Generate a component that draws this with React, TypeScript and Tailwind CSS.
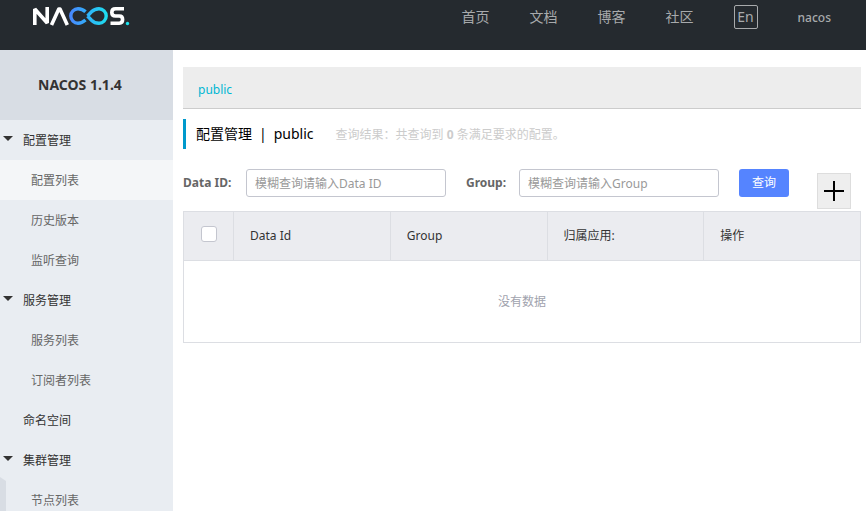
import React from "react";

const navLinks = ["首页", "文档", "博客", "社区"];

type MenuItem = { label: string; kind: "group" | "child" | "plain"; active?: boolean };

const menu: MenuItem[] = [
  { label: "配置管理", kind: "group" },
  { label: "配置列表", kind: "child", active: true },
  { label: "历史版本", kind: "child" },
  { label: "监听查询", kind: "child" },
  { label: "服务管理", kind: "group" },
  { label: "服务列表", kind: "child" },
  { label: "订阅者列表", kind: "child" },
  { label: "命名空间", kind: "plain" },
  { label: "集群管理", kind: "group" },
  { label: "节点列表", kind: "child" },
];

function Logo() {
  return (
    <svg width="97" height="19" viewBox="0 0 97 19" fill="none" aria-label="NACOS" role="img">
      <defs>
        <linearGradient id="loop" x1="36" y1="0" x2="76" y2="0" gradientUnits="userSpaceOnUse">
          <stop offset="0" stopColor="#4a85ff" />
          <stop offset="0.5" stopColor="#2fb4f8" />
          <stop offset="1" stopColor="#1be3ee" />
        </linearGradient>
      </defs>
      <g stroke="#fff" strokeWidth="3.6">
        <path d="M1.800 18V2L14.200 16V0" strokeLinejoin="bevel" />
        <path d="M18.500 18L25.800 2H27L34.300 18" strokeLinejoin="round" />
        <path d="M91 1.800H82.500Q78.800 1.800 78.800 5.400T82.500 9H86.300Q89.600 9 89.600 12.600T86.300 16.200H77.500" />
      </g>
      <path
        d="M52.500 4.800C50.500 2.800 48 1.800 45 1.800A7.200 7.200 0 0 0 45 16.200C48 16.200 50 15.200 52.500 13M54.500 9L58.500 4.800C60.500 2.800 63 1.800 66 1.800A7.200 7.200 0 0 1 66 16.200C63 16.200 60.500 15.200 58.500 13.200L54.500 9"
        stroke="url(#loop)"
        strokeWidth="3.4"
      />
      <circle cx="94.500" cy="16.500" r="1.700" fill="#1be3ee" />
    </svg>
  );
}

function Header() {
  return (
    <header className="flex h-[50px] items-start justify-between bg-[#252a2f] pr-[35px] pl-8">
      <a href="#home" className="mt-[7px] ml-px">
        <Logo />
      </a>
      <nav className="flex items-start text-sm text-[#a8aaac]">
        {navLinks.map((label) => (
          <a key={label} href="#nav" className="mt-[7px] mr-10 leading-5">
            {label}
          </a>
        ))}
        <button className="mt-[5px] mr-10 h-6 w-6 rounded-xs border border-[#a8aaac] leading-5">En</button>
        <a href="#user" className="mt-2 text-xs leading-5 font-medium">
          nacos
        </a>
      </nav>
    </header>
  );
}

function Sidebar() {
  return (
    <aside className="relative w-[173px] shrink-0 overflow-hidden bg-[#e9edf2]">
      <h1 className="h-[70px] bg-[#d8dde4] pl-[38px] text-sm leading-[70px] font-bold text-[#333]">NACOS 1.1.4</h1>
      <ul>
        {menu.map((item) => (
          <li key={item.label}>
            <a
              href="#menu"
              className={
                "flex h-10 items-center pt-0.5 " +
                (item.kind === "child" ? "pl-[31px] text-[#666] " : "text-[#333] ") +
                (item.kind === "plain" ? "pl-[23px] " : "") +
                (item.active ? "bg-[#f4f6f8]" : "")
              }
            >
              {item.kind === "group" && (
                <svg width="10" height="8" viewBox="0 0 10 8" className="mr-[10px] mb-1 ml-[3px]" aria-hidden="true">
                  <path d="M0 1H10L5 6Z" fill="#333" />
                </svg>
              )}
              {item.label}
            </a>
          </li>
        ))}
      </ul>
      <div className="absolute bottom-0 left-0">
        <svg width="6" height="34" viewBox="0 0 6 34" aria-hidden="true">
          <path d="M0 0L6 4V34H0Z" fill="#d8dde4" />
        </svg>
      </div>
    </aside>
  );
}

function SearchBar() {
  return (
    <form className="mt-5 flex items-start">
      <label htmlFor="dataId" className="w-[63px] leading-7 font-bold text-[#666]">
        Data ID:
      </label>
      <input
        id="dataId"
        placeholder="模糊查询请输入Data ID"
        className="h-7 w-[200px] rounded-[3px] border border-[#c4c6cf] px-2 outline-none placeholder:text-[#999]"
      />
      <label htmlFor="group" className="ml-5 w-[53px] leading-7 font-bold text-[#666]">
        Group:
      </label>
      <input
        id="group"
        placeholder="模糊查询请输入Group"
        className="h-7 w-[200px] rounded-[3px] border border-[#c4c6cf] px-2 outline-none placeholder:text-[#999]"
      />
      <button type="button" className="ml-5 h-7 w-[50px] rounded-[3px] bg-[#5584ff] text-white">
        查询
      </button>
      <button
        type="button"
        aria-label="新建配置"
        className="mt-1 mr-[10px] ml-auto flex h-9 w-[34px] items-center justify-center border border-[#ddd] bg-[#eee]"
      >
        <svg width="20" height="20" viewBox="0 0 20 20" aria-hidden="true">
          <path d="M0 10H20M10 0V20" stroke="#000" strokeWidth="2" />
        </svg>
      </button>
    </form>
  );
}

function ConfigTable() {
  const columns = ["Data Id", "Group", "归属应用:", "操作"];
  return (
    <table className="mt-[2px] w-full table-fixed border-collapse border border-[#dcdee3]">
      <thead>
        <tr className="h-[49px] bg-[#ebecf0] text-[#333]">
          <th className="w-[50px] border border-[#dcdee3] pb-1">
            <input
              type="checkbox"
              aria-label="全选"
              className="mx-auto block h-4 w-4 appearance-none rounded-[3px] border border-[#c4c6cf] bg-white"
            />
          </th>
          {columns.map((label) => (
            <th key={label} className="border border-[#dcdee3] px-4 text-left font-normal">
              {label}
            </th>
          ))}
        </tr>
      </thead>
      <tbody>
        <tr>
          <td colSpan={5} className="h-[82px] text-center text-[#a0a2ad]">
            没有数据
          </td>
        </tr>
      </tbody>
    </table>
  );
}

export default function App() {
  return (
    <div className="flex h-screen flex-col overflow-hidden bg-white font-['Noto_Sans','Noto_Sans_CJK_SC',sans-serif] text-xs">
      <Header />
      <div className="flex min-h-0 flex-1">
        <Sidebar />
        <main className="min-w-0 flex-1 pt-[17px] pr-[5px] pl-[10px]">
          <div className="flex h-[42px] items-center border-b border-[#ccc] bg-[#ededed] px-[15px] pt-1">
            <a href="#public" className="text-[#00b7d3]">
              public
            </a>
          </div>
          <div className="mt-[10px] flex h-[30px] items-center border-l-3 border-[#09c] pl-[10px]">
            <h2 className="flex gap-[7px] text-sm text-black">
              <span>配置管理</span>
              <span>|</span>
              <span>public</span>
            </h2>
            <p className="ml-[22px] pt-0.5 text-[#ccc]">
              查询结果：共查询到 <strong>0</strong> 条满足要求的配置。
            </p>
          </div>
          <SearchBar />
          <ConfigTable />
        </main>
      </div>
    </div>
  );
}
